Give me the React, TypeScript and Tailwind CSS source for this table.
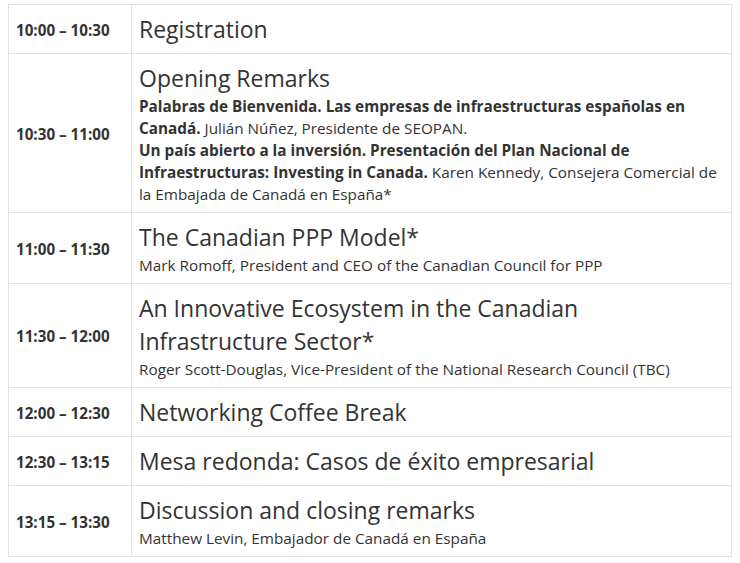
const rows: { time: string; title: string; body?: React.ReactNode }[] = [
    { time: '10:00 – 10:30', title: 'Registration' },
    {
        time: '10:30 – 11:00',
        title: 'Opening Remarks',
        body: (
            <>
                <strong className="font-bold">Palabras de Bienvenida. Las empresas de infraestructuras españolas en Canadá.</strong> Julián Núñez, Presidente de SEOPAN.
                <br />
                <strong className="font-bold">Un país abierto a la inversión. Presentación del Plan Nacional de Infraestructuras: Investing in Canada.</strong> Karen Kennedy, Consejera Comercial de la Embajada de Canadá en España*
            </>
        ),
    },
    {
        time: '11:00 – 11:30',
        title: 'The Canadian PPP Model*',
        body: 'Mark Romoff, President and CEO of the Canadian Council for PPP',
    },
    {
        time: '11:30 – 12:00',
        title: 'An Innovative Ecosystem in the Canadian Infrastructure Sector*',
        body: 'Roger Scott-Douglas, Vice-President of the National Research Council (TBC)',
    },
    { time: '12:00 – 12:30', title: 'Networking Coffee Break' },
    { time: '12:30 – 13:15', title: 'Mesa redonda: Casos de éxito empresarial' },
    {
        time: '13:15 – 13:30',
        title: 'Discussion and closing remarks',
        body: 'Matthew Levin, Embajador de Canadá en España',
    },
];

export default function App() {
    return (
        <div className="bg-white pt-1 pl-2 min-h-[563px] text-[#333]" style={{ fontFamily: '"Open Sans", sans-serif' }}>
            <table className="w-[724px] border-collapse border border-[#e2e2e2]">
                <tbody>
                    {rows.map((row) => (
                        <tr key={row.time}>
                            <td className="w-[123px] border border-[#e2e2e2] pl-[7px] pr-2 pt-2 pb-[7px] align-middle text-[15.2px] font-bold leading-[22px] whitespace-nowrap">
                                {row.time}
                            </td>
                            <td className="border border-[#e2e2e2] pl-[7px] pr-2 pt-2 pb-[7px] align-top">
                                <div className="text-[23px] leading-[33px]">{row.title}</div>
                                {row.body && <div className="text-[15.3px] leading-[22px]">{row.body}</div>}
                            </td>
                        </tr>
                    ))}
                </tbody>
            </table>
        </div>
    );
}
